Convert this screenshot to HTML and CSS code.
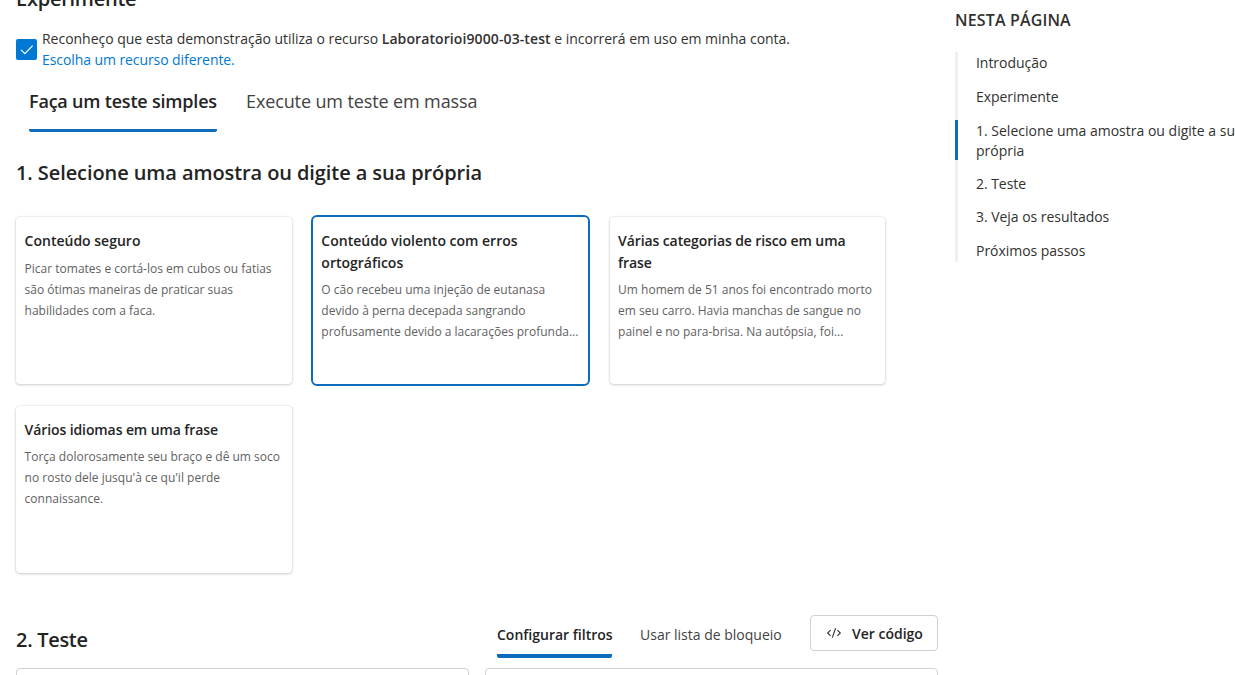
FILE: index.html
```html
<!DOCTYPE html>
<html lang="pt-BR">
<head>
<meta charset="utf-8">
<title>Experimente</title>
<link rel="stylesheet" href="styles.css">
</head>
<body>
<div class="page">
  <main class="main">
    <h2 class="page-title">Experimente</h2>
    <div class="ack">
      <span class="checkbox"><svg width="21" height="21" viewBox="0 0 21 21"><path d="M5 10.8 8.9 14.7 16.6 6.6" fill="none" stroke="#fff" stroke-width="1.2"/></svg></span>
      <div class="ack-text">
        <div class="ack-line"><span class="ack-a">Reconheço que esta demonstração utiliza o recurso </span><b class="ack-b">Laboratorioi9000-03-test</b><span class="ack-c"> e incorrerá em uso em minha conta.</span></div>
        <a class="link">Escolha um recurso diferente.</a>
      </div>
    </div>
    <nav class="tabs">
      <span class="tab tab-active">Faça um teste simples</span>
      <span class="tab">Execute um teste em massa</span>
    </nav>
    <h3 class="step-title">1. Selecione uma amostra ou digite a sua própria</h3>
    <section class="samples">
      <article class="card">
        <h4 class="card-title">Conteúdo seguro</h4>
        <p class="card-text">Picar tomates e cortá-los em cubos ou fatias<br>são ótimas maneiras de praticar suas<br>habilidades com a faca.</p>
      </article>
      <article class="card card-selected">
        <h4 class="card-title">Conteúdo violento com erros<br>ortográficos</h4>
        <p class="card-text">O cão recebeu uma injeção de eutanasa<br>devido à perna decepada sangrando<br>profusamente devido a lacarações profunda...</p>
      </article>
      <article class="card">
        <h4 class="card-title card-title-snug">Várias categorias de risco em uma<br>frase</h4>
        <p class="card-text">Um homem de 51 anos foi encontrado morto<br>em seu carro. Havia manchas de sangue no<br>painel e no para-brisa. Na autópsia, foi...</p>
      </article>
      <article class="card">
        <h4 class="card-title card-title-snug">Vários idiomas em uma frase</h4>
        <p class="card-text">Torça dolorosamente seu braço e dê um soco<br>no rosto dele jusqu'à ce qu'il perde<br>connaissance.</p>
      </article>
    </section>
    <div class="test-head">
      <h3 class="test-title">2. Teste</h3>
      <span class="subtab subtab-active">Configurar filtros</span>
      <span class="subtab subtab-idle">Usar lista de bloqueio</span>
      <button class="code-btn"><svg width="16" height="14" viewBox="0 0 16 14"><path d="M4.6 4.2 1.7 7l2.9 2.8M11.4 4.2 14.3 7l-2.9 2.8M9.6 2.2 6.3 11.6" fill="none" stroke="#333" stroke-width="1.1"/></svg><span class="code-label">Ver código</span></button>
    </div>
    <div class="panels"><div class="panel"></div><div class="panel"></div></div>
  </main>
  <aside class="toc">
    <h4 class="toc-title">NESTA PÁGINA</h4>
    <ul class="toc-list">
      <li class="toc-item">Introdução</li>
      <li class="toc-item">Experimente</li>
      <li class="toc-item toc-active">1. Selecione uma amostra ou digite a su<br>própria</li>
      <li class="toc-item">2. Teste</li>
      <li class="toc-item">3. Veja os resultados</li>
      <li class="toc-item">Próximos passos</li>
    </ul>
  </aside>
</div>
</body>
</html>
```
FILE: styles.css
```css
* { box-sizing: border-box; }
body { margin: 0; background: #fff; color: #242424; font-family: "Open Sans", "Noto Sans", sans-serif; }
h2, h3, h4, p, ul { margin: 0; padding: 0; font-weight: 600; }
.page { display: flex; height: 675px; overflow: hidden; white-space: nowrap; }
.main { width: 939px; padding-left: 16px; flex: none; }
.page-title { margin-top: -15px; height: 28px; font-size: 20px; line-height: 28px; letter-spacing: -0.25px; }
.ack { display: flex; gap: 5px; margin-top: 15px; height: 42px; }
.checkbox { width: 21px; height: 21px; margin-top: 11px; background: #0078d4; border-radius: 2px; }
.checkbox svg { display: block; }
.ack-text { font-size: 14px; line-height: 21px; letter-spacing: -0.02px; color: #323130; }
.ack-line { height: 21px; white-space: pre; }
.ack-b { font-weight: 600; letter-spacing: 0.1px; }
.ack-c { letter-spacing: -0.03px; }
.link { color: #0078d4; letter-spacing: -0.08px; }
.tabs { display: flex; gap: 29px; margin: 12px 0 0 13px; height: 50px; font-size: 18px; line-height: 39px; letter-spacing: -0.12px; color: #424242; }
.tab-active { width: 188px; color: #242424; font-weight: 600; letter-spacing: -0.2px; border-bottom: 3px solid #0f6cbd; border-radius: 2px; }
.step-title { margin-top: 27px; height: 28px; font-size: 20px; line-height: 28px; letter-spacing: -0.09px; }
.samples { display: grid; grid-template-columns: repeat(3, 275.5px); grid-auto-rows: 167px; gap: 21.5px 21.25px; margin-top: 30px; }
.card { padding: 13px 8.6px; border-radius: 4px; background: #fff; box-shadow: 0 0 2px rgba(0,0,0,.16), 0 1px 3px rgba(0,0,0,.17); }
.card-selected { outline: 2px solid #0f6cbd; box-shadow: none; }
.card-title { font-size: 14px; line-height: 21.5px; margin-bottom: 6.4px; }
.card-title-snug { letter-spacing: -0.1px; }
.card-text { font-size: 12px; line-height: 21px; font-weight: 400; color: #616161; }
.test-head { display: flex; margin-top: 42px; height: 44px; }
.test-title { width: 481px; font-size: 20px; line-height: 50px; letter-spacing: -0.3px; }
.subtab { height: 43px; font-size: 14px; line-height: 39px; color: #424242; }
.subtab-active { width: 115px; color: #242424; font-weight: 600; border-bottom: 4px solid #0f6cbd; border-radius: 2px; }
.subtab-idle { width: 170px; margin-left: 28px; }
.code-btn { display: flex; flex: none; align-items: center; gap: 10px; width: 128px; height: 36px; padding: 0 0 0 15px; border: 1px solid #d1d1d1; border-radius: 4px; background: #fff; color: #242424; font: 600 14px "Open Sans", sans-serif; }
.code-label { padding-top: 2px; }
.panels { display: flex; gap: 16px; margin-top: 9px; }
.panel { width: 453px; height: 40px; border: 1px solid #d1d1d1; border-radius: 4px; }
.toc { padding-left: 16px; flex: none; }
.toc-title { margin-top: 9px; font-size: 16px; line-height: 22px; letter-spacing: 0.15px; color: #323130; }
.toc-list { list-style: none; margin-top: 21px; height: 210px; padding-top: 1px; border-left: 3px solid #f0f0f0; }
.toc-item { font-size: 14px; font-weight: 400; line-height: 20px; letter-spacing: -0.04px; margin-bottom: 13.5px; padding-left: 18px; color: #323130; }
.toc-active { height: 40px; padding-top: 1px; margin-left: -3px; border-left: 3px solid #0f6cbd; letter-spacing: 0; }
```
